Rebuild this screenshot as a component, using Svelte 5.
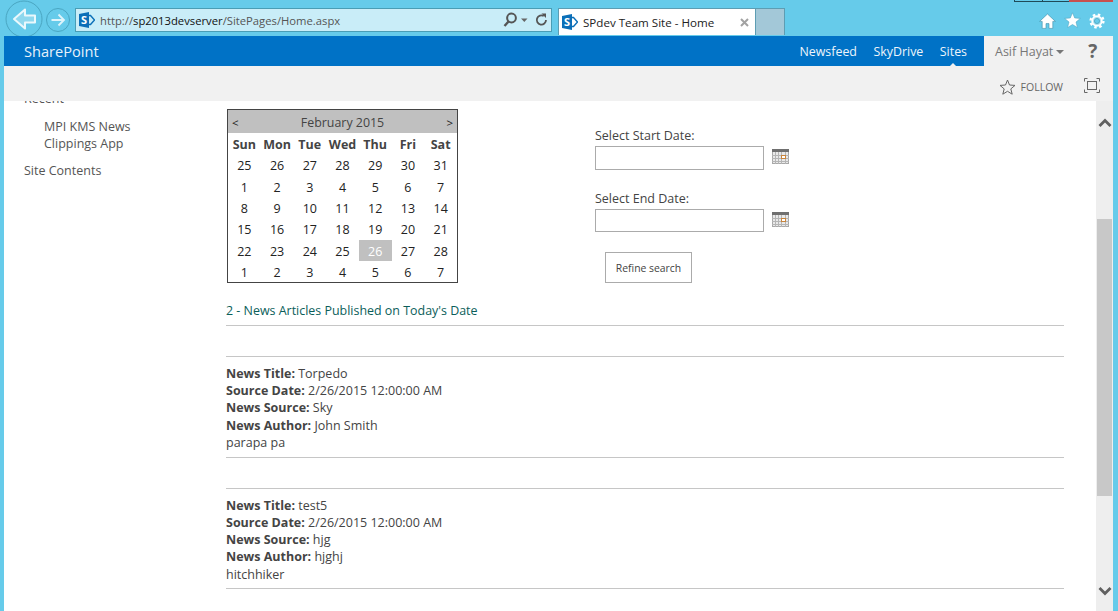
<script>
  const heads = ['Sun', 'Mon', 'Tue', 'Wed', 'Thu', 'Fri', 'Sat'];
  const days = [25,26,27,28,29,30,31,1,2,3,4,5,6,7,8,9,10,11,12,13,14,15,16,17,18,19,20,21,22,23,24,25,26,27,28,1,2,3,4,5,6,7];
  const articles = [
    { title: 'Torpedo', date: '2/26/2015 12:00:00 AM', source: 'Sky', author: 'John Smith', body: 'parapa pa' },
    { title: 'test5', date: '2/26/2015 12:00:00 AM', source: 'hjg', author: 'hjghj', body: 'hitchhiker' }
  ];
</script>

{#snippet splogo(size)}
  <svg class="splogo" width={size} height={size} viewBox="0 0 16 16">
    <path d="M0 2 L10 0 V16 L0 14 Z" fill="#0b6fb8" />
    <path d="M10 3.5 H11.5 L15.5 8 L11.5 12.5 H10" fill="none" stroke="#0b6fb8" stroke-width="1.4" />
    <text x="5" y="11.8" text-anchor="middle" class="splogo-s">S</text>
  </svg>
{/snippet}

{#snippet calicon()}
  <svg class="calicon" width="17" height="15" viewBox="0 0 17 15">
    <rect x="0.5" y="0.5" width="16" height="14" fill="#e9e9e9" stroke="#a8a8a8" />
    <rect x="0" y="0" width="17" height="3" fill="#6f6f6f" />
    <path d="M0 6.5H17M0 9.5H17M0 12.5H17M3.5 3V15M6.5 3V15M9.5 3V15M13.5 3V15" stroke="#b5b5b5" stroke-width="1" />
    <rect x="9.5" y="6.5" width="4" height="3" fill="#fff" stroke="#c8843c" />
  </svg>
{/snippet}

<div class="window">
  <div class="winbtns"><span class="wb w1"></span><span class="wb w2"></span><span class="wb w3"></span></div>

  <header class="chrome">
    <div class="navbtns">
      <svg class="back" width="38" height="38" viewBox="0 0 38 38">
        <circle cx="19" cy="19" r="18" fill="#66cbea" stroke="#4aa6c2" />
        <path d="M30 15.5H20V9.5L9 19L20 28.5V22.5H30Z" fill="#8fd8ee" stroke="#eaf8fc" stroke-width="2" stroke-linejoin="round" />
      </svg>
      <svg class="fwd" width="24" height="24" viewBox="0 0 24 24">
        <circle cx="12" cy="12" r="11.5" fill="#66cbea" stroke="#4aa6c2" />
        <path d="M5.5 12H17.5M12.5 6.5L18 12L12.5 17.5" fill="none" stroke="#dff4fb" stroke-width="1.8" />
      </svg>
    </div>
    <div class="address">
      {@render splogo(16)}
      <span class="url">http://<b>sp2013devserver</b>/SitePages/Home.aspx</span>
      <svg class="addr-ic" width="46" height="16" viewBox="0 0 46 16">
        <circle cx="9.5" cy="6" r="4.4" fill="none" stroke="#555" stroke-width="2" />
        <path d="M6.5 9.5L2.5 14" stroke="#555" stroke-width="2.4" />
        <path d="M19 6.5h6.5l-3.2 3.5z" fill="#666" />
        <path d="M44 8a4.6 4.6 0 1 1-2.2-3.9" fill="none" stroke="#555" stroke-width="1.8" />
        <path d="M39.5 1.5h4.5v4.5z" fill="#555" />
      </svg>
    </div>
    <div class="tab">
      {@render splogo(16)}
      <span class="tab-title">SPdev Team Site - Home</span>
      <svg class="tab-x" width="9" height="9" viewBox="0 0 9 9"><path d="M1 1l7 7M8 1L1 8" stroke="#a2a2a2" stroke-width="2" /></svg>
    </div>
    <div class="newtab"></div>
    <div class="tools">
      <svg width="17" height="16" viewBox="0 0 17 16">
        <path d="M8.5 1L.6 8.4h2.6V15.4h3.8v-4.8h3V15.4h3.8V8.4h2.6Z" fill="#fff" stroke="#3d8ba6" stroke-width="0.6" stroke-linejoin="round" />
      </svg>
      <svg width="17" height="17" viewBox="0 0 17 17">
        <path d="M8.5 0.8l2.2 5.2 5.6.4-4.3 3.6 1.4 5.5-4.9-3-4.9 3 1.4-5.5L.7 6.4l5.6-.4z" fill="#fff" stroke="#4a9fba" stroke-width="0.5" />
      </svg>
      <svg width="16" height="16" viewBox="0 0 16 16">
        <circle cx="8" cy="8" r="4.8" fill="#a9e2f3" stroke="#fff" stroke-width="1.8" />
        <circle cx="8" cy="8" r="6.4" fill="none" stroke="#fff" stroke-width="2.4" stroke-dasharray="2.5 2.53" />
        <circle cx="8" cy="8" r="2.6" fill="#66cbea" stroke="#4a9fba" stroke-width="0.7" />
      </svg>
    </div>
  </header>

  <div class="page">
    <div class="suitebar">
      <span class="brand">SharePoint</span>
      <nav class="suitenav">
        <span>Newsfeed</span>
        <span>SkyDrive</span>
        <span class="active">Sites</span>
      </nav>
      <div class="user">
        <span class="uname">Asif Hayat</span><i class="caret"></i>
        <span class="help">?</span>
      </div>
    </div>

    <div class="ribbon">
      <svg width="17" height="16" viewBox="0 0 17 16">
        <path d="M8.5 1l2 5 5.5.4-4.2 3.5 1.4 5.3-4.7-2.9-4.7 2.9 1.4-5.3L1 6.4 6.5 6z" fill="none" stroke="#666" stroke-width="1" />
      </svg>
      <span class="follow">FOLLOW</span>
      <svg class="focus" width="17" height="15" viewBox="0 0 17 15">
        <rect x="4.5" y="3.5" width="9" height="8" fill="none" stroke="#666" stroke-width="1" />
        <path d="M1.5 3.5V.5H4.5M13.5.5H16.5V3.5M1.5 11.5V14.5H4.5M13.5 14.5H16.5V11.5" fill="none" stroke="#666" stroke-width="1" />
      </svg>
    </div>

    <div class="main">
      <aside class="quicknav">
        <div class="ql">Recent</div>
        <div class="ql sub">MPI KMS News<br />Clippings App</div>
        <div class="ql">Site Contents</div>
      </aside>

      <section class="content">
        <div class="filters">
          <div class="calendar">
            <div class="cal-title"><span>&lt;</span><span class="cal-month">February 2015</span><span>&gt;</span></div>
            <div class="cal-grid">
              {#each heads as h}<div class="cal-h">{h}</div>{/each}
              {#each days as d, i}<div class="cal-d" class:today={i === 32}>{d}</div>{/each}
            </div>
          </div>
          <div class="dates">
            <label class="dlabel" for="start">Select Start Date:</label>
            <div class="drow"><input id="start" class="dinput" />{@render calicon()}</div>
            <label class="dlabel second" for="end">Select End Date:</label>
            <div class="drow"><input id="end" class="dinput end" />{@render calicon()}</div>
            <button class="refine">Refine search</button>
          </div>
        </div>

        <h3 class="count">2 - News Articles Published on Today's Date</h3>
        <div class="rule-first"></div>

        {#each articles as a}
          <article class="article">
            <div><b>News Title:</b> {a.title}</div>
            <div><b>Source Date:</b> {a.date}</div>
            <div><b>News Source:</b> {a.source}</div>
            <div><b>News Author:</b> {a.author}</div>
            <div>{a.body}</div>
          </article>
        {/each}
      </section>

      <div class="scrollbar">
        <svg class="sb-arrow up" width="14" height="9" viewBox="0 0 14 9"><path d="M1.5 8L7 2.5 12.5 8" fill="none" stroke="#606060" stroke-width="2.8" /></svg>
        <div class="thumb"></div>
        <svg class="sb-arrow down" width="14" height="9" viewBox="0 0 14 9"><path d="M1.5 1L7 6.5 12.5 1" fill="none" stroke="#606060" stroke-width="2.8" /></svg>
      </div>
    </div>
  </div>
</div>

<style>
  :global(body) { margin: 0; }
  .window {
    position: relative;
    width: 1118px;
    height: 611px;
    overflow: hidden;
    background: #66cbea;
    display: flex;
    flex-direction: column;
    font-family: "Open Sans", "Liberation Sans", sans-serif;
    color: #444;
    font-size: 12.5px;
  }
  .winbtns {
    position: absolute;
    top: 0;
    left: 1014px;
    display: flex;
    height: 2px;
  }
  .wb { display: block; height: 2px; box-sizing: border-box; }
  .w1 { width: 28px; border-bottom: 1px solid #1f4a58; border-left: 1px solid #1f4a58; }
  .w2 { width: 27px; border-bottom: 1px solid #1f4a58; border-left: 1px solid #1f4a58; }
  .w3 { width: 44px; background: #c75050; }

  .chrome {
    height: 36px;
    flex: none;
    display: flex;
    align-items: flex-start;
    position: relative;
    z-index: 0;
  }
  .navbtns { width: 75px; flex: none; position: relative; height: 36px; display: flex; gap: 3px; padding: 0 0 0 5px; box-sizing: border-box; }
  .back { flex: none; }
  .fwd { flex: none; margin-top: 8px; }
  .address {
    width: 477px;
    height: 24px;
    margin-top: 8px;
    box-sizing: border-box;
    background: #c9edf8;
    border: 1px solid #4a9db5;
    display: flex;
    align-items: center;
    padding-left: 3px;
    flex: none;
  }
  .splogo { flex: none; }
  .splogo-s { font: bold 11px "Open Sans", sans-serif; fill: #fff; }
  .url { margin-left: 5px; flex: 1; font-size: 11.25px; color: #555; white-space: nowrap; }
  .url b { font-weight: 400; color: #111; }
  .addr-ic { flex: none; margin-right: 3px; }
  .tab {
    margin-left: 6px;
    margin-top: 8px;
    width: 198px;
    height: 27px;
    box-sizing: border-box;
    background: #fff;
    border: 1px solid #5d9db3;
    border-bottom: 0;
    display: flex;
    align-items: center;
    padding-left: 3px;
    flex: none;
  }
  .tab-title { margin-left: 5px; flex: 1; font-size: 11.6px; color: #222; white-space: nowrap; }
  .tab-x { margin-right: 6px; flex: none; }
  .newtab {
    margin-top: 8px;
    width: 29px;
    height: 27px;
    box-sizing: border-box;
    background: #a3c8d8;
    border: 1px solid #5d9db3;
    border-left: 0;
    border-bottom: 0;
    flex: none;
  }
  .tools {
    margin-left: auto;
    margin-top: 12px;
    margin-right: 13px;
    display: flex;
    gap: 8px;
    align-items: center;
  }

  .page {
    margin: 0 5px 0 4px;
    flex: 1;
    min-height: 0;
    display: flex;
    flex-direction: column;
    background: #fff;
    position: relative;
    z-index: 1;
  }
  .suitebar {
    height: 30px;
    flex: none;
    background: #0072c6;
    display: flex;
    align-items: center;
    color: #fff;
  }
  .brand { margin-left: 20px; font-size: 14.6px; color: #e6f1fa; flex: 1; }
  .suitenav { display: flex; gap: 16.5px; font-size: 12.4px; margin-right: 17px; }
  .suitenav span { position: relative; color: #eef5fb; }
  .suitenav .active::after {
    content: "";
    position: absolute;
    left: 50%;
    margin-left: -4px;
    bottom: -7px;
    border: 4px solid transparent;
    border-top: 0;
    border-bottom-color: #f1f1f1;
  }
  .user {
    width: 129px;
    height: 30px;
    background: #f1f1f1;
    display: flex;
    align-items: center;
    box-sizing: border-box;
    padding-left: 11px;
    color: #777;
    font-size: 12.5px;
  }
  .caret {
    width: 0;
    height: 0;
    margin-left: 3px;
    margin-top: 2px;
    border: 4px solid transparent;
    border-bottom: 0;
    border-top-color: #777;
  }
  .help { margin-left: 24px; font-weight: 700; font-size: 19px; line-height: 20px; color: #666; }

  .ribbon {
    height: 35px;
    flex: none;
    background: #f1f1f1;
    display: flex;
    align-items: center;
    justify-content: flex-end;
    padding: 6px 13px 0 0;
    box-sizing: border-box;
  }
  .follow { font-size: 10.5px; margin-left: 5px; color: #666; }
  .focus { margin-left: 20px; margin-top: -3px; }

  .main { flex: 1; min-height: 0; display: flex; overflow: hidden; }
  .quicknav { width: 222px; flex: none; margin-top: -11px; padding-left: 20px; box-sizing: border-box; }
  .ql { line-height: 17px; color: #555; }
  .ql.sub { padding-left: 20px; margin-top: 11px; margin-bottom: 10px; }

  .content { width: 838px; flex: none; }
  .filters { display: flex; height: 200px; align-items: flex-start; }
  .calendar {
    margin-top: 8px;
    margin-left: 1px;
    width: 231px;
    height: 174px;
    box-sizing: border-box;
    border: 1px solid #444;
    flex: none;
  }
  .cal-title {
    height: 23px;
    background: #c0c0c0;
    display: flex;
    align-items: center;
    justify-content: space-between;
    padding: 2px 4px 0;
    box-sizing: border-box;
    font-size: 11.5px;
    color: #222;
  }
  .cal-month { font-size: 12.4px; color: #444; }
  .cal-grid {
    display: grid;
    grid-template-columns: repeat(7, 1fr);
    grid-auto-rows: 21.33px;
    text-align: center;
    line-height: 23px;
  }
  .cal-h { font-weight: 700; color: #444; }
  .cal-d { color: #222; }
  .cal-d.today { background: #c0c0c0; color: #fff; }

  .dates { margin-left: 137px; padding-top: 26px; display: flex; flex-direction: column; align-items: flex-start; }
  .dlabel { line-height: 17px; color: #444; }
  .dlabel.second { margin-top: 20px; }
  .drow { display: flex; align-items: center; margin-top: 2px; gap: 8px; }
  .calicon { margin-bottom: 3px; }
  .dinput {
    width: 169px;
    height: 24px;
    box-sizing: border-box;
    border: 1px solid #ababab;
    background: #fff;
    padding: 0;
    margin: 0;
  }
  .dinput.end { height: 23px; }
  .refine {
    margin: 20px 0 0 10px;
    width: 87px;
    height: 31px;
    box-sizing: border-box;
    border: 1px solid #ababab;
    background: #fff;
    font: 10.4px "Open Sans", sans-serif;
    color: #444;
    padding: 0;
  }

  .count { margin: 0; font-weight: 400; font-size: 12.45px; color: #0b5e5a; line-height: 17px; padding-top: 1px; }
  .rule-first { margin-top: 6.1px; border-top: 1px solid #c6c6c6; height: 0; }
  .article {
    margin-top: 30px;
    border-top: 1px solid #c6c6c6;
    border-bottom: 1px solid #c6c6c6;
    padding: 7.8px 0 5.45px;
    line-height: 17.25px;
    color: #444;
  }
  .article + .article { margin-top: 30.2px; }
  .article b { font-weight: 700; color: #444; }

  .scrollbar {
    position: relative;
    flex: none;
    width: 17px;
    background: #eee;
    margin-left: auto;
  }
  .thumb { position: absolute; top: 118px; left: 1px; width: 15px; height: 277px; background: #c8c8c8; }
  .sb-arrow { position: absolute; left: 2px; }
  .sb-arrow.up { top: 17px; }
  .sb-arrow.down { top: 486px; }
</style>
